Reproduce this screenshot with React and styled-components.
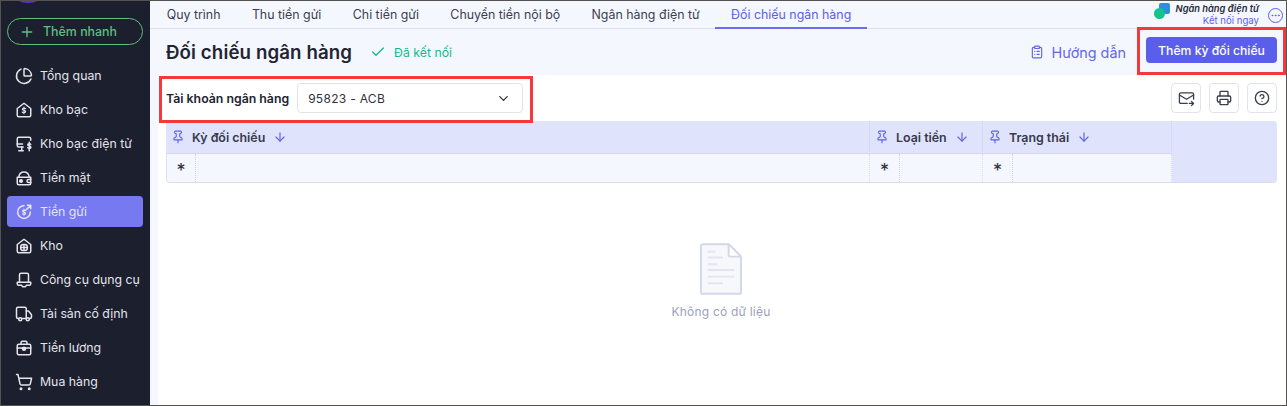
import React from "react";
import styled, { createGlobalStyle } from "styled-components";
import {
  Plus,
  ChartPie,
  Check,
  ClipboardList,
  ChevronDown,
  Printer,
  CircleHelp,
  Pin,
  ArrowDown,
  Ellipsis,
  ShoppingCart
} from "lucide-react";

const GlobalStyle = createGlobalStyle`
  html, body {
    margin: 0;
    padding: 0;
    background: #f5f7ff;
    font-family: Inter, "Noto Sans", sans-serif;
    overflow: hidden;
  }
  * { box-sizing: border-box; }
`;

const Page = styled.div`
  position: relative;
  width: 1287px;
  height: 406px;
  display: flex;
  overflow: hidden;
  border: 1px solid #55534f;
`;

const Sidebar = styled.aside`
  width: 149px;
  flex: none;
  background: #1c1f2e;
  padding: 17px 6px 0 6px;
  position: relative;
  color: #e8e9f0;
`;

const Logo = styled.div`
  position: absolute;
  top: -16px;
  left: 12px;
  width: 30px;
  height: 18px;
  border-radius: 50%;
  background: #5a30d8;
`;

const QuickAdd = styled.button`
  width: 136px;
  height: 27px;
  display: flex;
  align-items: center;
  padding: 0 11px;
  gap: 8px;
  margin-bottom: 15px;
  background: transparent;
  border: 1px solid #5fbe82;
  border-radius: 14px;
  color: #5fbe82;
  font: 500 12.4px Inter, sans-serif;
`;

const MenuItem = styled.div`
  width: 136px;
  height: 31px;
  margin-bottom: 3px;
  display: flex;
  align-items: center;
  gap: 7px;
  padding-left: 8px;
  border-radius: 4px;
  font-size: 12.3px;
  white-space: nowrap;
  color: #e3e4ec;
  background: ${p => (p.$active ? "#7679f0" : "transparent")};
  svg {
    flex: none;
  }
`;

const Main = styled.main`
  flex: 1;
  min-width: 0;
  display: flex;
  flex-direction: column;
`;

const TabBar = styled.nav`
  height: 28px;
  flex: none;
  display: flex;
  align-items: stretch;
  border-bottom: 1px solid #dcdfec;
`;

const Tab = styled.div`
  padding: 1px 15.7px 0;
  margin-left: ${p => (p.$first ? "1px" : "0")};
  display: flex;
  align-items: center;
  font-size: 12.4px;
  white-space: nowrap;
  color: ${p => (p.$active ? "#5a5fe6" : "#3a3f50")};
  border-bottom: 2px solid ${p => (p.$active ? "#6a6df0" : "transparent")};
  margin-bottom: -1px;
`;

const Promo = styled.div`
  margin-left: auto;
  display: flex;
  align-items: flex-start;
  padding: 2px 3px 0 0;
`;

const PromoMark = styled.span`
  position: relative;
  width: 16px;
  height: 16px;
  margin-right: 6px;
  &::before {
    content: "";
    position: absolute;
    right: 0;
    top: 0;
    width: 11px;
    height: 11px;
    border-radius: 2px;
    background: #2c8fe0;
  }
  &::after {
    content: "";
    position: absolute;
    left: 0;
    bottom: 0;
    width: 11px;
    height: 11px;
    border-radius: 50%;
    background: #12c48b;
  }
`;

const PromoText = styled.div`
  display: flex;
  flex-direction: column;
  align-items: flex-end;
  font-size: 9.3px;
  line-height: 12px;
`;

const PromoTitle = styled.span`
  font-style: italic;
  font-weight: 600;
  color: #272a38;
`;

const PromoLink = styled.span`
  color: #5a5fe6;
  font-size: 9.6px;
`;

const MoreButton = styled.span`
  width: 15px;
  height: 15px;
  margin: 5px 0 0 9px;
  border: 1px solid #5a5fe6;
  border-radius: 50%;
  display: flex;
  align-items: center;
  justify-content: center;
  color: #5a5fe6;
`;

const Header = styled.header`
  height: 46px;
  flex: none;
  display: flex;
  align-items: center;
  padding: 0 9px 0 16px;
`;

const Title = styled.h1`
  margin: 0;
  font-size: 18.7px;
  font-weight: 600;
  color: #22242f;
  letter-spacing: 0.1px;
`;

const Connected = styled.div`
  display: flex;
  align-items: center;
  gap: 8px;
  margin-left: 18px;
  font-size: 12.3px;
  color: #16b98a;
`;

const Guide = styled.div`
  margin-left: auto;
  display: flex;
  align-items: center;
  gap: 8px;
  font-size: 14.4px;
  color: #6467ea;
`;

const PrimaryButton = styled.button`
  margin: 0 0 4px 20px;
  width: 131px;
  height: 26px;
  border: none;
  border-radius: 4px;
  background: #5b5eea;
  color: #fff;
  font: 500 12.2px Inter, sans-serif;
  white-space: nowrap;
  padding: 0;
`;

const Content = styled.section`
  flex: 1;
  background: #fff;
  margin-left: 8px;
  padding: 0 9px 0 8px;
  display: flex;
  flex-direction: column;
`;

const Filters = styled.div`
  height: 46px;
  flex: none;
  display: flex;
  align-items: center;
`;

const Label = styled.span`
  font-size: 12.3px;
  font-weight: 600;
  color: #22242f;
  white-space: nowrap;
`;

const Select = styled.div`
  width: 226px;
  height: 30px;
  margin-left: 8px;
  padding: 0 11px 0 10px;
  display: flex;
  align-items: center;
  justify-content: space-between;
  border: 1px solid #e2e4ec;
  border-radius: 4px;
  font-size: 12px;
  letter-spacing: 0.3px;
  color: #2f3240;
`;

const Tools = styled.div`
  margin-left: auto;
  display: flex;
  gap: 8px;
`;

const ToolButton = styled.span`
  width: 30px;
  height: 30px;
  display: flex;
  align-items: center;
  justify-content: center;
  border: 1px solid #e2e4ec;
  border-radius: 4px;
  color: #3a3d4c;
`;

const Table = styled.div`
  height: 62px;
  flex: none;
  display: grid;
  grid-template-columns: 704px 113px 189px 1fr;
  grid-template-rows: 33px 1fr;
  border-radius: 4px;
  overflow: hidden;
  border-bottom: 1px solid #d9dbe6;
  background: #f5f7ff;
`;

const HeadCell = styled.div`
  display: flex;
  align-items: center;
  padding-left: 5px;
  background: #e0e3fc;
  border-right: 1px dotted #cdd0ee;
  border-bottom: 1px solid #d5d8f2;
  color: #5f63ea;
`;

const HeadLabel = styled.span`
  margin: 0 8px 0 7px;
  font-size: 12.4px;
  font-weight: 600;
  color: #363a4c;
  white-space: nowrap;
`;

const FilterCell = styled.div`
  display: flex;
  border-right: 1px dotted #d9dbe6;
`;

const Star = styled.span`
  width: 30px;
  flex: none;
  padding-top: 7px;
  text-align: center;
  font-size: 18px;
  line-height: 20px;
  color: #2a2c38;
  border-left: ${p => (p.$edge ? "1px solid #e0e2ec" : "none")};
  border-right: 1px dotted #cfd1de;
`;

const ActionColumn = styled.div`
  grid-column: 4;
  grid-row: 1 / span 2;
  background: #e0e3fc;
`;

const Empty = styled.div`
  flex: 1;
  display: flex;
  flex-direction: column;
  align-items: center;
  padding-top: 60px;
  padding-right: 1px;
  gap: 9px;
  font-size: 12px;
  letter-spacing: 0.2px;
  color: #9a9fbc;
`;

const Callout = styled.div`
  position: absolute;
  border: 3px solid #f4393c;
  pointer-events: none;
  left: ${p => p.$x}px;
  top: ${p => p.$y}px;
  width: ${p => p.$w}px;
  height: ${p => p.$h}px;
`;

const icon = { width: 18, height: 18, viewBox: "0 0 24 24", fill: "none", stroke: "currentColor", strokeWidth: 2, strokeLinecap: "round", strokeLinejoin: "round" };

const SafeIcon = () => (
  <svg {...icon}>
    <path d="M3 10 12 3l9 7v9a2 2 0 0 1-2 2H5a2 2 0 0 1-2-2z" />
    <path d="M14.2 10.2c-.5-.6-1.3-.9-2.2-.9-1.2 0-2.2.6-2.2 1.6 0 2.3 4.4 1 4.4 3.2 0 1-1 1.6-2.2 1.6-1 0-1.8-.4-2.3-1M12 8v9" strokeWidth="1.5" />
  </svg>
);

const EBankIcon = () => (
  <svg {...icon}>
    <path d="M11 16H5a2 2 0 0 1-2-2V5a2 2 0 0 1 2-2h14a2 2 0 0 1 2 2v2" />
    <path d="M3 12h7M9 16v5M5 21h6" />
    <path d="M21 12.5c-.4-.7-1.1-1-2-1-1.1 0-2 .6-2 1.6 0 2.3 4.2 1 4.2 3.2 0 1-.9 1.6-2.1 1.6-.9 0-1.7-.4-2.1-1M19 9.5V21" />
  </svg>
);

const WalletIcon = () => (
  <svg {...icon}>
    <path d="M3 11h18v8a2 2 0 0 1-2 2H5a2 2 0 0 1-2-2z" />
    <path d="M5 11c.5-4 3-7 7-7s6.500 3 7 7" />
    <circle cx="8" cy="16" r="1.800" fill="currentColor" />
    <path d="M21 14h-3a2 2 0 0 0 0 4h3" />
  </svg>
);

const DepositIcon = () => (
  <svg {...icon}>
    <path d="M20.500 12A8.500 8.500 0 1 1 12 3.500" />
    <path d="M15 9 21 3M16.500 3H21v4.500" />
    <path d="M14 10.200c-.4-.6-1.100-.9-2-.9-1.100 0-2 .5-2 1.500 0 2.200 4.200 1 4.200 3 0 1-.9 1.500-2.100 1.500-.9 0-1.700-.4-2.100-1M12 8v8.400" strokeWidth="1.500" />
  </svg>
);

const StoreIcon = () => (
  <svg {...icon}>
    <path d="M3 10 12 3l9 7v9a2 2 0 0 1-2 2H5a2 2 0 0 1-2-2z" />
    <rect x="7.500" y="10" width="9" height="8" rx="3.500" />
    <path d="M12 10v8M7.500 14h9" />
  </svg>
);

const ToolIcon = () => (
  <svg {...icon}>
    <path d="M6 15V5a2 2 0 0 1 2-2h8a2 2 0 0 1 2 2v10" />
    <path d="M3 15h18v2a2 2 0 0 1-2 2h-4l-1 2h-4l-1-2H5a2 2 0 0 1-2-2z" />
  </svg>
);

const TruckIcon = () => (
  <svg {...icon}>
    <path d="M5 18H4a2 2 0 0 1-2-2V5a2 2 0 0 1 2-2h9a2 2 0 0 1 2 2v13H9" />
    <path d="M15 8h3l4 5v3a2 2 0 0 1-2 2h-1" />
    <circle cx="7" cy="19" r="2" />
    <circle cx="17" cy="19" r="2" />
  </svg>
);

const SalaryIcon = () => (
  <svg {...icon}>
    <rect x="3" y="7" width="18" height="14" rx="2" />
    <path d="M8 7V5a2 2 0 0 1 2-2h4a2 2 0 0 1 2 2v2" />
    <path d="M3 12h18" />
    <circle cx="12" cy="13" r="2" fill="currentColor" />
  </svg>
);

const MailSendIcon = () => (
  <svg width="17" height="17" viewBox="0 0 24 24" fill="none" stroke="currentColor" strokeWidth="1.800" strokeLinecap="round" strokeLinejoin="round">
    <path d="M13 19H4a2 2 0 0 1-2-2V6a2 2 0 0 1 2-2h16a2 2 0 0 1 2 2v7" />
    <path d="m2 7 10 6 10-6" />
    <path d="M16 19h6M19 16l3 3-3 3" />
  </svg>
);

const menu = [
  { label: "Tổng quan", Icon: () => <ChartPie size={18} strokeWidth={2} /> },
  { label: "Kho bạc", Icon: SafeIcon },
  { label: "Kho bạc điện tử", Icon: EBankIcon },
  { label: "Tiền mặt", Icon: WalletIcon },
  { label: "Tiền gửi", Icon: DepositIcon, active: true },
  { label: "Kho", Icon: StoreIcon },
  { label: "Công cụ dụng cụ", Icon: ToolIcon },
  { label: "Tài sản cố định", Icon: TruckIcon },
  { label: "Tiền lương", Icon: SalaryIcon },
  { label: "Mua hàng", Icon: () => <ShoppingCart size={18} strokeWidth={2} /> }
];

const tabs = ["Quy trình", "Thu tiền gửi", "Chi tiền gửi", "Chuyển tiền nội bộ", "Ngân hàng điện tử", "Đối chiếu ngân hàng"];

const columns = ["Kỳ đối chiếu", "Loại tiền", "Trạng thái"];

const App = () => (
  <>
    <GlobalStyle />
    <Page>
      <Sidebar>
        <Logo />
        <QuickAdd>
          <Plus size={16} />
          Thêm nhanh
        </QuickAdd>
        {menu.map(({ label, Icon, active }) => (
          <MenuItem key={label} $active={active}>
            <Icon />
            {label}
          </MenuItem>
        ))}
      </Sidebar>
      <Main>
        <TabBar>
          {tabs.map((t, i) => (
            <Tab key={t} $active={i === tabs.length - 1} $first={i === 0}>
              {t}
            </Tab>
          ))}
          <Promo>
            <PromoMark />
            <PromoText>
              <PromoTitle>Ngân hàng điện tử</PromoTitle>
              <PromoLink>Kết nối ngay</PromoLink>
            </PromoText>
            <MoreButton>
              <Ellipsis size={11} />
            </MoreButton>
          </Promo>
        </TabBar>
        <Header>
          <Title>Đối chiếu ngân hàng</Title>
          <Connected>
            <Check size={16} />
            Đã kết nối
          </Connected>
          <Guide>
            <ClipboardList size={14} />
            Hướng dẫn
          </Guide>
          <PrimaryButton>Thêm kỳ đối chiếu</PrimaryButton>
        </Header>
        <Content>
          <Filters>
            <Label>Tài khoản ngân hàng</Label>
            <Select>
              95823 - ACB
              <ChevronDown size={15} />
            </Select>
            <Tools>
              <ToolButton>
                <MailSendIcon />
              </ToolButton>
              <ToolButton>
                <Printer size={16} />
              </ToolButton>
              <ToolButton>
                <CircleHelp size={16} />
              </ToolButton>
            </Tools>
          </Filters>
          <Table>
            {columns.map(c => (
              <HeadCell key={c}>
                <Pin size={14} />
                <HeadLabel>{c}</HeadLabel>
                <ArrowDown size={14} />
              </HeadCell>
            ))}
            <ActionColumn />
            {columns.map((c, i) => (
              <FilterCell key={c}>
                <Star $edge={i === 0}>*</Star>
              </FilterCell>
            ))}
          </Table>
          <Empty>
            <svg width="42" height="52" viewBox="0 0 44 54" fill="none">
              <path d="M3 1h27l13 13v37a2 2 0 0 1-2 2H3a2 2 0 0 1-2-2V3a2 2 0 0 1 2-2z" fill="#f7f8fc" stroke="#d3d7e8" strokeWidth="2" />
              <path d="M30 1v11a2 2 0 0 0 2 2h11z" fill="#fff" stroke="#d3d7e8" strokeWidth="2" strokeLinejoin="round" />
              <path d="M8 9h8M8 15h16M8 22h10M8 28h28M8 35h28M8 42h16" stroke="#e2e5f0" strokeWidth="2" />
            </svg>
            Không có dữ liệu
          </Empty>
        </Content>
      </Main>
      <Callout $x={158} $y={75} $w={374} $h={47} />
      <Callout $x={1136} $y={26} $w={149} $h={48} />
    </Page>
  </>
);

export default App;
